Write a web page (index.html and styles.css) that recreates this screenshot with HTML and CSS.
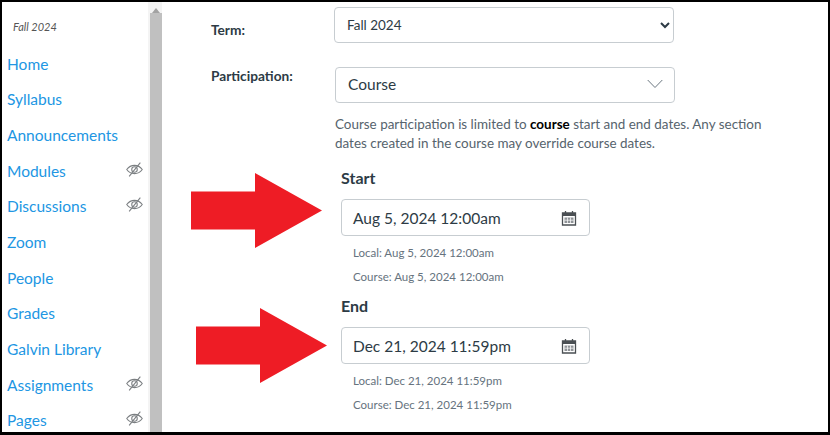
FILE: index.html
```html
<!DOCTYPE html>
<html>
<head>
<title>Course Details</title>
<link rel="stylesheet" href="styles.css">
</head>
<body>
<svg class="defs" width="0" height="0">
    <symbol id="eye" viewBox="0 0 16 16">
        <path d="M.7 8C2.600 5.400 5.100 4.100 8 4.100S13.400 5.400 15.300 8C13.400 10.600 10.900 11.900 8 11.900S2.600 10.600.7 8Z" fill="none" stroke="#7b7f82" stroke-width="1"/>
        <circle cx="8" cy="8" r="2.600" fill="none" stroke="#7b7f82" stroke-width="1"/>
        <path d="M3 14.500 13.500 1.500" stroke="#7b7f82" stroke-width="1"/>
    </symbol>
    <symbol id="cal" viewBox="0 0 16 16">
        <path d="M1.500 3H14.500V15H1.500Z" fill="none" stroke="#4a4f53" stroke-width="1.300"/>
        <path d="M1.500 3H14.500V6H1.500Z" fill="#4a4f53"/>
        <path d="M4.500 1V4M11.500 1V4" stroke="#4a4f53" stroke-width="1.300"/>
        <path d="M3.500 7.500H12.500V13H3.500Z" fill="#8f9397"/>
        <path d="M6.500 7.500V13M9.500 7.500V13M3.500 10.200H12.500" stroke="#ffffff" stroke-width=".7"/>
    </symbol>
</svg>
<div class="marco">
    <nav class="menu">
        <p class="periodo">Fall 2024</p>
        <a class="enlace">Home</a>
        <a class="enlace">Syllabus</a>
        <a class="enlace">Announcements</a>
        <a class="enlace">Modules <svg class="ojo"><use href="#eye"/></svg></a>
        <a class="enlace">Discussions <svg class="ojo"><use href="#eye"/></svg></a>
        <a class="enlace">Zoom</a>
        <a class="enlace">People</a>
        <a class="enlace">Grades</a>
        <a class="enlace">Galvin Library</a>
        <a class="enlace">Assignments <svg class="ojo"><use href="#eye"/></svg></a>
        <a class="enlace">Pages <svg class="ojo"><use href="#eye"/></svg></a>
    </nav>
    <div class="barra">
        <div class="flecha"></div>
        <div class="pulgar"></div>
    </div>
    <main class="contenido">
        <div class="fila fila-term">
            <label class="etiqueta" for="term">Term:</label>
            <select class="campo-term" id="term">
                <option>Fall 2024</option>
            </select>
        </div>
        <div class="fila fila-part">
            <span class="etiqueta">Participation:</span>
            <div class="columna">
                <div class="campo campo-part">
                    <span>Course</span>
                    <svg width="16" height="10" viewBox="0 0 16 10"><path d="M.7 1 8 8.500 15.300 1" fill="none" stroke="#6b7780" stroke-width="1"/></svg>
                </div>
                <p class="ayuda">Course participation is limited to <b>course</b> start and end dates. Any section dates created in the course may override course dates.</p>
            </div>
        </div>
        <section class="fecha fecha-start">
            <h2>Start</h2>
            <div class="campo campo-fecha">
                <span>Aug 5, 2024 12:00am</span>
                <svg class="cal" width="16" height="16" viewBox="0 0 16 16"><use href="#cal"/></svg>
            </div>
            <p class="nota">Local: Aug 5, 2024 12:00am</p>
            <p class="nota">Course: Aug 5, 2024 12:00am</p>
        </section>
        <section class="fecha">
            <h2>End</h2>
            <div class="campo campo-fecha">
                <span>Dec 21, 2024 11:59pm</span>
                <svg class="cal" width="16" height="16" viewBox="0 0 16 16"><use href="#cal"/></svg>
            </div>
            <p class="nota">Local: Dec 21, 2024 11:59pm</p>
            <p class="nota">Course: Dec 21, 2024 11:59pm</p>
        </section>
    </main>
    <svg class="arrow arrow-start" width="131" height="75" viewBox="0 0 131 75"><path d="M0 18.500H64V0L131 37.500 64 75V56.500H0Z" fill="#ee1c25"/></svg>
    <svg class="arrow arrow-end" width="131" height="75" viewBox="0 0 131 75"><path d="M0 18.500H64V0L131 37.500 64 75V56.500H0Z" fill="#ee1c25"/></svg>
</div>
</body>
</html>
```

FILE: styles.css
```css
* {
    box-sizing: border-box;
    padding: 0;
    margin: 0;
}
body {
    width: 830px;
    height: 435px;
    overflow: hidden;
    background-color: white;
    font-family: Lato, "Open Sans", sans-serif;
}
.defs {
    position: absolute;
}
.marco {
    position: relative;
    display: flex;
    width: 830px;
    height: 435px;
    border: solid black;
    border-width: 2px 2px 3px 2px;
    overflow: hidden;
}
.menu {
    width: 146px;
    flex-shrink: 0;
    padding: 0 5px;
}
.periodo {
    margin: 18px 0 0 6px;
    height: 26px;
    font-size: 11px;
    line-height: 14px;
    font-style: italic;
    color: #555;
}
.enlace {
    display: flex;
    justify-content: space-between;
    align-items: center;
    height: 35.650px;
    font-size: 15.500px;
    color: #2196e3;
}
.ojo {
    width: 17px;
    height: 17px;
    margin: -3px 0 0 0;
}
.barra {
    width: 14px;
    flex-shrink: 0;
    padding-left: 2px;
    background-color: #f4f4f4;
}
.flecha {
    width: 0;
    height: 11px;
    margin-left: 2px;
    border: 4px solid transparent;
    border-top-width: 2px;
    border-bottom: 5px solid #a3a3a3;
}
.pulgar {
    height: 100%;
    background-color: #c0c0c0;
}
.contenido {
    flex: 1;
    padding: 5px 0 0 49px;
    color: #2d3b45;
}
.fila {
    display: flex;
}
.etiqueta {
    font-size: 13.700px;
    font-weight: 700;
}
.fila-term .etiqueta {
    width: 123px;
    padding-top: 13px;
    line-height: 20px;
}
.fila-part {
    margin-top: 24px;
}
.fila-part .etiqueta {
    width: 124px;
    line-height: 18px;
}
.campo-term {
    width: 340px;
    height: 36px;
    padding-left: 8px;
    border: 1px solid #c7cdd1;
    border-radius: 4px;
    background-color: white;
    font-family: Lato, sans-serif;
    font-size: 13.500px;
    color: #2d3b45;
}
.campo {
    display: flex;
    justify-content: space-between;
    align-items: center;
    border: 1px solid #c7cdd1;
    border-radius: 4px;
    font-size: 15.500px;
}
.campo-part {
    width: 340px;
    height: 36px;
    padding: 0 11px 2px 12px;
}
.ayuda {
    width: 440px;
    margin-top: 12px;
    font-size: 13.450px;
    line-height: 18.500px;
    color: #56636d;
}
.ayuda b {
    color: black;
}
.fecha {
    margin-left: 130px;
    width: 260px;
}
.fecha-start {
    margin-top: 16px;
}
.fecha h2 {
    font-size: 16px;
    line-height: 20px;
    font-weight: 700;
}
.campo-fecha {
    width: 249px;
    height: 37px;
    margin-top: 11px;
    padding: 0 12px 0 11px;
}
.cal {
    display: block;
}
.nota {
    margin-left: 12px;
    height: 24px;
    font-size: 11.500px;
    line-height: 24px;
    color: #66737e;
}
.campo-fecha + .nota {
    margin-top: 5px;
}
.fecha-start + .fecha {
    margin-top: 7px;
}
/* flechas rojas pegadas encima de la captura */
.arrow {
    position: absolute;
}
.arrow-start {
    left: 189px;
    top: 170.500px;
}
.arrow-end {
    left: 194px;
    top: 305.500px;
}
```
